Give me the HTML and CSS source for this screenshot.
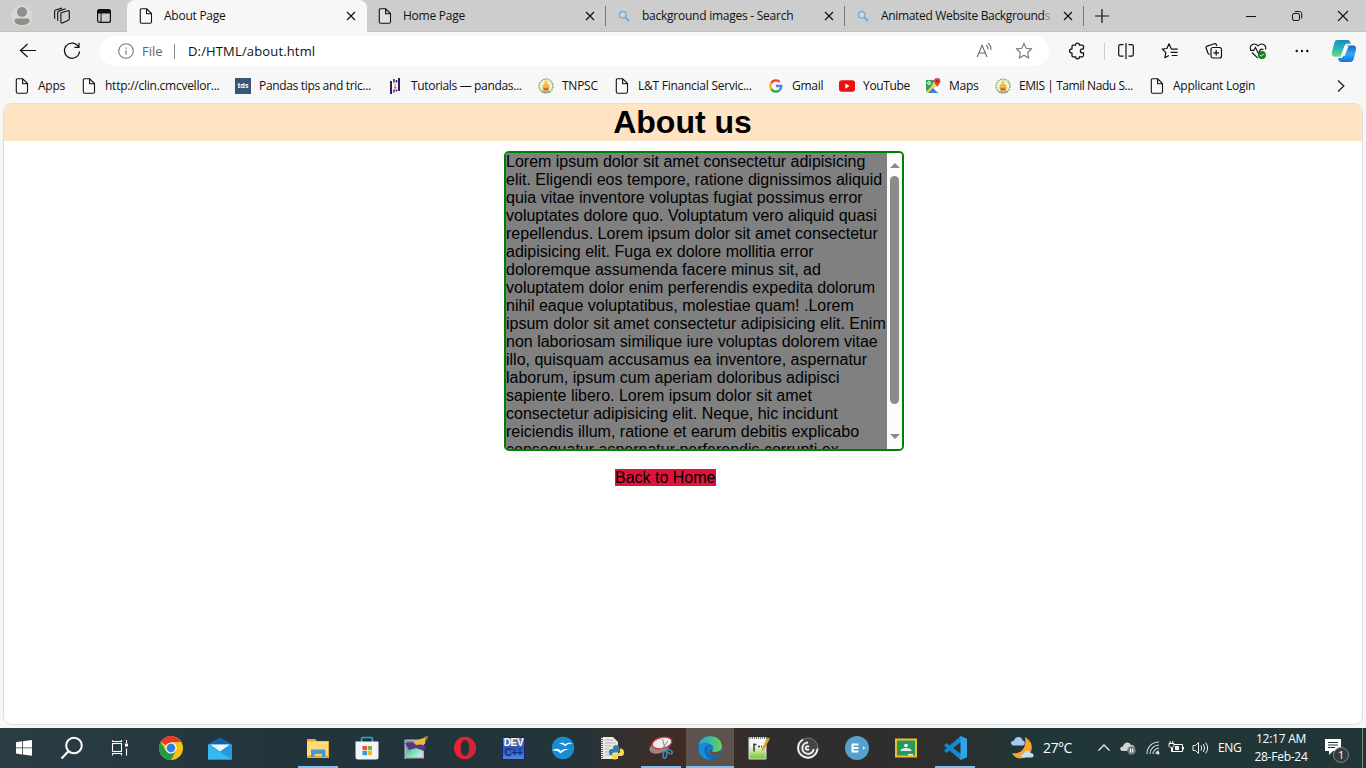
FILE: index.html
```html
<!DOCTYPE html>
<html lang="en">
<head>
<meta charset="utf-8">
<title>About Page</title>
<link rel="stylesheet" href="styles.css">
</head>
<body>
<svg class="defs" aria-hidden="true">
  <symbol id="file" viewBox="0 0 16 16"><path d="M3.5.8h5.2l4.8 4.8v8.1c0 1-.5 1.5-1.5 1.5H3.8c-1 0-1.5-.5-1.5-1.5V2.2c0-.9.4-1.4 1.2-1.4zM8.6.9v4.9h4.8" fill="#fff" fill-opacity=".4" stroke="#111" stroke-width="1.1"/></symbol>
  <symbol id="close" viewBox="0 0 10 10"><path d="M1 1l8 8M9 1l-8 8" stroke="#111" stroke-width="1.15" fill="none"/></symbol>
  <symbol id="find" viewBox="0 0 12 12"><path d="M7.6 7.6L11 11" stroke="#7da5c4" stroke-width="2"/><circle cx="4.8" cy="4.8" r="3.3" fill="#c5dbea" stroke="#82add0" stroke-width="1.5"/></symbol>
  <symbol id="emblem" viewBox="0 0 16 16"><circle cx="8" cy="8" r="7" fill="#f4efcf" stroke="#86b088" stroke-width="1.4" stroke-dasharray="2 .7"/><path d="M8 1.5l3.4 7.2v4H4.6v-4z" fill="#f2ca4c"/><path d="M5 7.5h6M4.5 9.5h7" stroke="#ef9e59"/><path d="M5.5 10h5v2.5h-5z" fill="#e3584c"/><path d="M3.5 14h9" stroke="#79a680" stroke-width="1.3"/></symbol>
</svg>
<header class="tabs">
  <div class="tools">
    <svg width="22" height="22" viewBox="0 0 22 22"><circle cx="11" cy="11" r="10.6" fill="#dad8d6"/><circle cx="11" cy="7" r="5" fill="#918e8a"/><path d="M3.5 15.5q0-2 2-2h11q2 0 2 2c0 6-15 6-15 0z" fill="#918e8a"/></svg>
    <svg width="18" height="18" viewBox="0 0 18 18" fill="none" stroke="#111" stroke-width="1.1"><path d="M8.2 5.7l6.7-2c.9-.2 1.4.1 1.4 1v7.1c0 .7-.3 1.1-1 1.4l-5.9 2.7c-.9.4-1.5 0-1.5-.9V6.7c0-.5.1-.8.3-1zM5.2 13.8c-.4-.2-.5-.5-.5-1V5.4c0-.7.3-1.1 1-1.3l6.900-2.300M2.300 11.500c-.5-.2-.7-.5-.7-1V4.200c0-.7.3-1 .9-1.200L9 1.100"/></svg>
    <svg width="16" height="16" viewBox="0 0 16 16"><rect x="1.6" y="1.6" width="12.8" height="12.8" rx="2" fill="none" stroke="#111" stroke-width="1.2"/><path d="M1.5 5.6V3c0-1 .6-1.7 1.7-1.7h9.600c1 0 1.700.7 1.700 1.700v2.600z" fill="#111"/><path d="M5 5v9" stroke="#111"/></svg>
  </div>
  <div class="tab active"><svg class="i16"><use href="#file"/></svg><span class="ttl">About Page</span><svg class="x"><use href="#close"/></svg></div>
  <div class="tab"><svg class="i16"><use href="#file"/></svg><span class="ttl">Home Page</span><svg class="x"><use href="#close"/></svg></div>
  <div class="tab"><svg class="i12"><use href="#find"/></svg><span class="ttl">background images - Search</span><svg class="x"><use href="#close"/></svg></div>
  <div class="tab"><svg class="i12"><use href="#find"/></svg><span class="ttl t4">Animated Website Background<i>s</i></span><svg class="x"><use href="#close"/></svg></div>
  <svg class="new" width="14" height="14" viewBox="0 0 14 14"><path d="M7 0v14M0 7h14" stroke="#111" stroke-width="1.2"/></svg>
  <div class="winctl">
    <svg width="46" height="32" viewBox="0 0 46 32"><path d="M18 16.5h10" stroke="#111"/></svg>
    <svg width="46" height="32" viewBox="0 0 46 32" fill="none" stroke="#111"><rect x="18.5" y="13.5" width="7" height="7" rx="1.6"/><path d="M20.7 11.5h4.8c1.3 0 2.2.8 2.2 2v5"/></svg>
    <svg width="46" height="32" viewBox="0 0 46 32"><path d="M18 11l10 10M28 11L18 21" stroke="#111" stroke-width="1.1"/></svg>
  </div>
</header>
<nav class="bar">
  <svg class="c44" viewBox="0 0 44 32"><path d="M36 15.5H20.5M27.5 9l-7 6.500 7 6.500" fill="none" stroke="#111" stroke-width="1.2"/></svg>
  <svg class="c44" viewBox="0 0 44 32" fill="none" stroke="#111" stroke-width="1.2"><path d="M34.600 11.800A7.600 7.600 0 1 0 35.600 16.500M35 7.700v4.600h-4.600"/></svg>
  <div class="url">
    <svg width="16" height="16" viewBox="0 0 16 16"><circle cx="8" cy="8" r="7.3" fill="none" stroke="#777" stroke-width="1.1"/><path d="M8 7.2v4.4M8 4.4v1.4" stroke="#777" stroke-width="1.2"/></svg>
    <span class="scheme">File</span><b></b><span class="addr">D:/HTML/about.html</span>
    <svg class="read" width="20" height="18" viewBox="0 0 20 18" fill="none" stroke="#6b6b6b" stroke-width="1.1"><path d="M2.2 15L7.1 3.2 12 15M3.8 11h6.6M11.2 3.3c1.5 1 2 2.3 1.7 4M13 1.2c2.5 1.6 3.4 4 2.7 6.8"/></svg>
    <svg width="18" height="18" viewBox="0 0 18 18"><path d="M9 1.4l2.2 4.9 5.4.6-4 3.6 1.1 5.4L9 13.2l-4.700 2.700 1.100-5.400-4-3.600 5.400-.6z" fill="none" stroke="#777" stroke-width="1.1" stroke-linejoin="round"/></svg>
  </div>
  <div class="right">
    <svg width="18" height="18" viewBox="0 0 18 18" fill="none" stroke="#111" stroke-width="1.25"><path d="M5.200 3h2.300c0-2.600 4-2.600 4 0h2.800c.8 0 1.200.4 1.200 1.200v2.700h-1c-2.800 0-2.800 4 0 4h1v2.700c0 .8-.4 1.200-1.200 1.200h-2.800c0 2.600-4 2.600-4 0H5.200c-.8 0-1.200-.4-1.200-1.200V11c-3.300-.2-3.300-3.900 0-4.100V4.200C4 3.400 4.400 3 5.200 3z"/></svg>
    <b></b>
    <svg width="18" height="18" viewBox="0 0 18 18" fill="none" stroke="#111" stroke-width="1.2"><path d="M6.5 2.7H3.3c-1 0-1.6.6-1.6 1.6v8.200c0 1 .6 1.600 1.600 1.600h3.200M11.500 2.700h3.200c1 0 1.600.6 1.600 1.600v8.200c0 1-.6 1.600-1.600 1.600h-3.200M9 1v16"/></svg>
    <svg width="18" height="18" viewBox="0 0 18 18" fill="none" stroke="#111" stroke-width="1.2"><path d="M10.3 7L8 1.8 5.9 6.5l-4.600.6 3.500 3.500-.9 5.100 4-2.200M10.200 7.100h6.500M9.600 10.300h7M10.700 13.500h5.800" stroke-linejoin="round"/></svg>
    <svg width="18" height="18" viewBox="0 0 18 18" fill="none" stroke="#111" stroke-width="1.2"><rect x="6" y="5.5" width="10.5" height="10.5" rx="2"/><path d="M11.2 8v5.5M8.5 10.8H14M4.500 12.400c-.9-.1-1.300-.6-1.600-1.400L1.200 6.200c-.4-1 0-1.800 1-2.100l7.200-2.300c1-.3 1.600.1 2 1l.4 1.200"/></svg>
    <svg width="18" height="18" viewBox="0 0 18 18"><path d="M1.6 7.5C0 3.2 5.6-.1 9 4c3.400-4.100 9-.8 7.400 3.500M1 8.400h3.800l1.600-3 3 6 2-4h3M3 10.500l5.800 5.700" fill="none" stroke="#111" stroke-width="1.1"/><circle cx="12.9" cy="13" r="4" fill="#197a22"/><path d="M11 13l1.3 1.3L15 11.600" fill="none" stroke="#fff"/></svg>
    <svg width="18" height="18" viewBox="0 0 18 18" fill="#111"><circle cx="3.7" cy="9" r="1.2"/><circle cx="9" cy="9" r="1.2"/><circle cx="14.3" cy="9" r="1.2"/></svg>
    <svg class="copilot" width="26" height="24" viewBox="0 0 26 24"><defs><linearGradient id="cp" x2="0" y2="1"><stop stop-color="#168fc8"/><stop offset=".6" stop-color="#31bcab"/><stop offset="1" stop-color="#7bd67b"/></linearGradient><linearGradient id="cq" x2="0" y2="1"><stop stop-color="#1c62c8"/><stop offset=".5" stop-color="#2fa8f4"/><stop offset="1" stop-color="#1b70df"/></linearGradient></defs><path d="M6.7 1h10c1.8 0 2.4 1.3 3 3.8H16c-1.500 0-2 1-2.500 2.500L10.700 16c-.4 1.200-1 1.800-2.200 1.800H4C1 17.800.4 15.400 1.200 12l2-7.800C3.900 1.800 4.800 1 6.700 1z" fill="url(#cp)"/><path d="M16.300 6.500H22c3 0 3.500 2.300 2.700 5.500l-2 7.700c-.6 2.300-1.600 3.300-3.600 3.300h-9c-1.900 0-2.500-1.500-3-4h3c1.200 0 1.700-.8 2.200-2.200l2.500-8.200c.4-1.400 1.200-2.100 1.500-2.100z" fill="url(#cq)"/><path d="M13.700 7h4l-4.100 10h-4z" fill="#eff9ff"/></svg>
  </div>
</nav>
<nav class="marks">
  <a><svg class="i16"><use href="#file"/></svg><span>Apps</span></a>
  <a><svg class="i16"><use href="#file"/></svg><span>http://clin.cmcvellor...</span></a>
  <a><em>tds</em><span class="m3">Pandas tips and tric...</span></a>
  <a><svg class="i16" viewBox="0 0 16 16"><path d="M4 3v13M12 0v13" stroke="#2b2060" stroke-width="2"/><path d="M7 1v3.500M7 11.500v3M9.500 2v2.500M9.500 11.500v2" stroke="#2b2060" stroke-width="1.5"/><path d="M7.200 5.500h2v2h-2z" fill="#e7b52c"/><path d="M7.200 8.500h2v2h-2z" fill="#d43191"/></svg><span class="m4">Tutorials — pandas...</span></a>
  <a><svg class="i16"><use href="#emblem"/></svg><span>TNPSC</span></a>
  <a><svg class="i16"><use href="#file"/></svg><span>L&amp;T Financial Servic...</span></a>
  <a><svg class="i16" viewBox="0 0 16 16" fill="none" stroke-width="2.4"><path d="M3.2 5.1A5.3 5.3 0 0 1 11.7 4" stroke="#e94235"/><path d="M3.2 5.1a6 6 0 0 0 0 5.8" stroke="#f9bb05"/><path d="M3.2 10.900a5.300 5.300 0 0 0 8.300 1.200" stroke="#34a853"/><path d="M8 8h5.300c0 1.800-.5 3.200-1.800 4.100" stroke="#4285f4"/></svg><span>Gmail</span></a>
  <a><svg class="i16" viewBox="0 0 16 16"><rect y="2.3" width="16" height="11.5" rx="2.8" fill="#f20c0c"/><path d="M6.300 5.500l4.200 2.600-4.200 2.600z" fill="#fff"/></svg><span class="m8">YouTube</span></a>
  <a><svg class="i16" viewBox="0 0 16 16"><path d="M1 2h13v13H1z" fill="#dce2e6"/><path d="M1 2h9L3 14 1 12z" fill="#31a455"/><path d="M3 15l10-10 1 8-6 2z" fill="#fff"/><path d="M1 14L12 3l2 2L4 15z" fill="#f8cd4a"/><path d="M3 15l5-5 5 5z" fill="#3e7edf"/><path d="M12.200 0a3.200 3.200 0 0 1 3.200 3.200c0 2-2.200 3.600-3.200 5.800-1-2.200-3.200-3.800-3.200-5.800A3.200 3.200 0 0 1 12.200 0z" fill="#e14437"/><circle cx="12.2" cy="3.2" r="1.1" fill="#8b251e"/><circle cx="4" cy="5" r="1.4" fill="none" stroke="#fff"/></svg><span>Maps</span></a>
  <a><svg class="i16"><use href="#emblem"/></svg><span class="m10">EMIS | Tamil Nadu S...</span></a>
  <a><svg class="i16"><use href="#file"/></svg><span>Applicant Login</span></a>
  <svg class="more" width="8" height="12" viewBox="0 0 8 12"><path d="M1 .5L6.800 6 1 11.500" fill="none" stroke="#222" stroke-width="1.3"/></svg>
</nav>
<main class="view">
  <h1>About us</h1>
  <section class="box">
    <div class="text">Lorem ipsum dolor sit amet consectetur adipisicing
elit. Eligendi eos tempore, ratione dignissimos aliquid
quia vitae inventore voluptas fugiat possimus error
voluptates dolore quo. Voluptatum vero aliquid quasi
repellendus. Lorem ipsum dolor sit amet consectetur
adipisicing elit. Fuga ex dolore mollitia error
doloremque assumenda facere minus sit, ad
voluptatem dolor enim perferendis expedita dolorum
nihil eaque voluptatibus, molestiae quam! .Lorem
ipsum dolor sit amet consectetur adipisicing elit. Enim
non laboriosam similique iure voluptas dolorem vitae
illo, quisquam accusamus ea inventore, aspernatur
laborum, ipsum cum aperiam doloribus adipisci
sapiente libero. Lorem ipsum dolor sit amet
consectetur adipisicing elit. Neque, hic incidunt
reiciendis illum, ratione et earum debitis explicabo
consequatur aspernatur perferendis corrupti ex</div>
    <div class="scroll"><i class="up"></i><i class="thumb"></i><i class="down"></i></div>
  </section>
  <a class="back">Back to Home</a>
</main>
<footer class="task">
  <div class="sys">
    <svg width="48" height="40" viewBox="0 0 48 40"><path d="M16 14.300l6-1v6.100h-6zM22.800 13.200l9.200-1.300v7.500h-9.200zM16 20.200h6v6.200l-6-1zM22.800 20.200H32v7.600l-9.200-1.300z" fill="#fff"/></svg>
    <svg width="48" height="40" viewBox="0 0 48 40"><circle cx="26" cy="17.500" r="7.800" fill="none" stroke="#fff" stroke-width="2"/><path d="M20.500 23.200L13.500 30.500" stroke="#fff" stroke-width="2.2"/></svg>
    <svg width="48" height="40" viewBox="0 0 48 40" fill="none" stroke="#fff" stroke-width="1.1"><rect x="16.500" y="15.500" width="9" height="8"/><path d="M16.500 12v1.500h9V12M16.500 27.500v-2h9v2M30.500 12v3M30.500 20.500v7"/><path d="M29.500 16h2v2h-2z" fill="#fff"/></svg>
  </div>
  <div class="apps">
    <div><svg viewBox="0 0 24 24"><circle cx="12" cy="12" r="12" fill="#fbc116"/><path d="M12 12L1.600 6A12 12 0 0 1 22.400 6H12z" fill="#e33b2e"/><path d="M1.600 6A12 12 0 0 0 12 24l5-9-5-3-5 3z" fill="#279847"/><circle cx="12" cy="12" r="5.600" fill="#fff"/><circle cx="12" cy="12" r="4.400" fill="#347de0"/></svg></div>
    <div><svg viewBox="0 0 24 24"><path d="M0 8l12-6.500L24 8v4H0z" fill="#1264b1"/><path d="M0 8.300h24v15.200H0z" fill="#259bdd"/><path d="M0 8.500l24 15H0z" fill="#37b9ee"/><path d="M2 8.500h20l-10 7z" fill="#f1f5f7"/></svg></div>
    <div></div>
    <div class="run"><svg viewBox="0 0 24 24"><path d="M1 3h8l2 2h12v17H1z" fill="#e8ab2c"/><path d="M1 5.500h21v14H1z" fill="#ffdc75"/><path d="M5 13.500h14.500V21H16v-3H8.500v3H5z" fill="#4698d4"/></svg></div>
    <div><svg viewBox="0 0 24 24"><path d="M6.500 6V3Q6.500 1.500 8 1.500h8q1.500 0 1.500 1.500v3" fill="none" stroke="#23a9dc" stroke-width="1.7"/><path d="M.5 5.500h23V21q0 2.500-2.500 2.500H3Q.5 23.500.5 21z" fill="#f2f4f5"/><path d="M7.500 10H12v4.200H7.500z" fill="#e8562e"/><path d="M12.800 10h4.200v4.200h-4.200z" fill="#7bb135"/><path d="M7.500 15H12v4.200H7.500z" fill="#2c9ddb"/><path d="M12.800 15h4.200v4.200h-4.200z" fill="#f5b71f"/></svg></div>
    <div><svg viewBox="0 0 24 24"><defs><linearGradient id="pl" x2="1" y2="1"><stop stop-color="#3f7bb0"/><stop offset=".5" stop-color="#6ddca7"/><stop offset="1" stop-color="#d9eaf7"/></linearGradient></defs><path d="M.5 3.500h20V23H.5z" fill="#b5b0c9"/><path d="M2.500 5h16v16h-16z" fill="url(#pl)"/><path d="M20.500 5v18H2" fill="none" stroke="#30244b"/><path d="M1 7l10-1 11 4-2 5-8-3-7 2z" fill="#5d3585"/><path d="M9 6L22 1l-1 7-9 1z" fill="#e8ba36"/><path d="M20 1l4-1-1 4z" fill="#b98732"/></svg></div>
    <div><svg viewBox="0 0 24 24"><path d="M12 .8C5.500.8 1 5.700 1 12s4.500 11.200 11 11.200S23 18.300 23 12 18.500.8 12 .8zm0 3c2.700 0 4.300 3.500 4.300 8.200s-1.600 8.200-4.300 8.200S7.700 16.700 7.700 12 9.300 3.800 12 3.800z" fill="#ed2134" fill-rule="evenodd"/><path d="M15 1.500a11 11 0 0 1 0 21l-2-2.500c5-2 4.500-14 0-16z" fill="#d32434"/></svg></div>
    <div><div class="dev"><b>DEV</b><b>C++</b></div></div>
    <div><svg viewBox="0 0 24 24"><circle cx="12" cy="12" r="11.200" fill="#188ed0"/><path d="M8 8c3-2 5-1.500 6 .5 2-2 5-2.500 8-1-4-.2-6 1-8 3-1-2-3-2.800-6-2.500zM1 14.500c4-2.500 7-2 8.500.5 3-2.500 6-2.500 9-1.500-4 0-6 1.200-9 4-2-2.500-4-3.500-8.500-3z" fill="#fff"/></svg></div>
    <div><svg viewBox="0 0 24 24"><path d="M1 1h12l5 5v17H1z" fill="#e8e8e4"/><path d="M2 1v22" stroke="#555" stroke-width="2" stroke-dasharray="1 1"/><path d="M5 4h8M5 7h11M5 10h7M5 13h4M5 16h4M5 19h5" stroke="#b5b5b5"/><path d="M13 13v-1q0-3 3-3t3.500 3v2q0 2.500-3 2.500h-2q-2.500 0-2.500 3-3 0-3-3.500T12 13z" fill="#377cb0"/><path d="M20 12.500q4 0 4 4T20.500 20H18q0 3.500-3.500 3.500T12 21v-1.500q0-2 3-2h2q3 0 3-3z" fill="#f9d949"/></svg></div>
    <div class="run"><svg viewBox="0 0 24 24"><ellipse cx="10.500" cy="11" rx="10.500" ry="6" transform="rotate(-20 10.500 11)" fill="#9c8582"/><ellipse cx="13" cy="7" rx="10" ry="5.500" transform="rotate(-12 13 7)" fill="#efedec" stroke="#c93a47" stroke-width="1.3"/><path d="M13.500 3l3 11M19 5l-7 9" stroke="#888"/><g fill="none" stroke="#398fb3" stroke-width="1.5"><ellipse cx="16" cy="18.500" rx="1.800" ry="3.800" transform="rotate(10 16 18.500)"/><ellipse cx="20.500" cy="15.500" rx="3" ry="1.700" transform="rotate(30 20.500 15.500)"/></g></svg></div>
    <div class="run current"><svg viewBox="0 0 24 24"><defs><linearGradient id="eg"><stop stop-color="#20a7db"/><stop offset="1" stop-color="#62d45b"/></linearGradient></defs><circle cx="12" cy="12" r="11.800" fill="#157bca"/><path d="M.5 10C2-3 23-3 24 10c.3 4-3 6-7 6-3 0-4-1-2-3 2-5-7-8-14.500-3z" fill="url(#eg)"/><path d="M.5 10c5-5 11-3 12 0-5 1-5 8 1 9.500 3 1 6 .5 8.500-.8C17 26 5 26 1.500 17Q0 14 .5 10z" fill="#1466b7"/><path d="M2 8C7 5 11 7 12.500 10c-5-2-8 3-5 8 1 2 2 4 5 5.500C4 24-2 16 2 8z" fill="#198cd7"/><path d="M15 13c-2 2-1 3 2 3 2.600 0 4.500-.6 5.700-1.800-.3 1.800-.5 3-.8 3.800-2 1.500-5 2-7.500 1.300-3-.8-4-5.300.6-6.300z" fill="#5d524d"/></svg></div>
    <div><svg viewBox="0 0 24 24"><defs><linearGradient id="np" x2="0" y2="1"><stop offset=".4" stop-color="#f7f9f0"/><stop offset="1" stop-color="#72c51d"/></linearGradient></defs><path d="M2 1.500h17V23H2z" fill="url(#np)" stroke="#ddd"/><path d="M3 2h15" stroke="#777" stroke-width="2" stroke-dasharray="1 1"/><path d="M7 7.500v8M7 8.500h2.500M11 10.500h2M14 10.500h1" stroke="#333" stroke-width="1.5"/><path d="M20.500 1.500l2.500 1-6 11-2.500 2 .5-3.500z" fill="#d4a52f"/></svg></div>
    <div><svg viewBox="0 0 24 24" fill="none" stroke="#efefef" stroke-width="2"><circle cx="12" cy="12" r="10" fill="#444" stroke="#777" stroke-width="1"/><path d="M7 3.500a9.700 9.700 0 1 0 14.500 9M12 6.500a5.700 5.700 0 1 0 5.700 6.500M13 11a1.800 1.800 0 1 0 0 2"/></svg></div>
    <div><svg viewBox="0 0 24 24"><circle cx="12" cy="12" r="12" fill="#54a2cc"/><path d="M13.500 8.500H7.500v7h6M7.500 12h6" stroke="#fff" stroke-width="2" fill="none"/><path d="M18 10.500l2.500 1.500-2.500 1.500z" fill="#fff"/></svg></div>
    <div><svg viewBox="0 0 24 24"><path d="M1 2.500h22v19H1z" fill="#efbd2e"/><path d="M3 4.500h18v15H3z" fill="#249b5c"/><circle cx="12" cy="9.500" r="1.800" fill="#fff"/><path d="M6.500 15q0-3 5.500-3t5.500 3z" fill="#d9efdf"/><path d="M14 18h5v1.500h-5z" fill="#eee"/></svg></div>
    <div class="run"><svg viewBox="0 0 24 24"><path d="M17.500 0L24 3v18l-6.500 3L1 9.500 3.500 7 18 18V6L3.500 17 1 14.500z" fill="#1688d2"/><path d="M17.500 0L24 3v18l-6.500 3z" fill="#30a5ec"/></svg></div>
  </div>
  <div class="tray">
    <svg width="26" height="24" viewBox="0 0 26 24"><path d="M15 1c9 5 9 15 1 20-6 3-12 1-14-4 9 2 15-5 13-16z" fill="#f5a62e"/><path d="M3 9.500C-.5 8 1 4.500 4 4.800 5-.2 12 0 12.500 4.500c3 0 3 5 0 5z" fill="#aac9f2"/><path d="M13 21.500c-2-.5-2-4 1-4 1-4 6-3.500 6.500-.5 4 0 4 4.500 1 4.500z" fill="#c7dcf7"/></svg>
    <span class="temp">27°C</span>
    <svg class="caret" width="14" height="10" viewBox="0 0 14 10"><path d="M1.500 7.500L7 2l5.500 5.500" fill="none" stroke="#eee" stroke-width="1.3"/></svg>
    <svg class="cloud" width="16" height="14" viewBox="0 0 16 14"><path d="M2 10C-1 9 0 5.500 3 5.500 4 1 9 0 11 4c4-1 5 5 2 6z" fill="#d1d3d4"/><circle cx="11.500" cy="9.500" r="4.300" fill="#737a7c"/><path d="M10.500 7.500v4M12.700 7.500v4" stroke="#fff" stroke-width="1.1"/></svg>
    <svg class="wifi" width="14" height="14" viewBox="0 0 14 14" fill="none" stroke="#ddd" stroke-width="1.1"><path d="M1 13C1 6 6 1 13 1M4 13c0-5 4-9 9-9M7 13c0-3 3-6 6-6M10 13c0-2 1-3 3-3"/><circle cx="12" cy="12" r="1" fill="#fff"/></svg>
    <svg class="bat" width="16" height="14" viewBox="0 0 16 14" fill="none" stroke="#fff"><path d="M6 3.500h8.500v7H4.500V7M15.500 6v2.500M1 2.500h5v2C6 6 5 6.500 3.500 6.500S1 6 1 4.500zM2.200 0v2M4.800 0v2M3.500 6.500v4h1"/><path d="M7.500 5.500h3v3h-3z" fill="#ddd"/></svg>
    <svg class="vol" width="17" height="14" viewBox="0 0 17 14" fill="none" stroke="#eee"><path d="M1 4.500h2.500l3-3v11l-3-3H1zM9 4.500q1.500 2.500 0 5M11.300 3q2.700 4 0 8M13.700 1.500q3.800 5.500 0 11"/></svg>
    <span class="eng">ENG</span>
    <div class="clock"><span>12:17 AM</span><span>28-Feb-24</span></div>
    <div class="note"><svg width="18" height="17" viewBox="0 0 18 17"><path d="M0 0h16v12H8l-4 4v-4H0z" fill="#fff"/><path d="M3 3.500h10M3 6h10M3 8.500h7" stroke="#263638"/></svg><b>1</b></div>
    <i class="edge"></i>
  </div>
</footer>
</body>
</html>
```
FILE: styles.css
```css
* { box-sizing: border-box; }
body { margin: 0; width: 1366px; height: 768px; overflow: hidden; display: flex; flex-direction: column; background: #f7f7f7; color: #111; font: 12px/16px "Open Sans", "Noto Sans", sans-serif; letter-spacing: -.25px; }
svg { display: block; flex: none; }
.defs { width: 0; height: 0; position: absolute; }
.i16 { width: 16px; height: 16px; }
.i12 { width: 12px; height: 12px; margin: 0 2px; }
.tabs { height: 32px; flex: none; display: flex; align-items: center; background: #cdcdcd; border-bottom: 1px solid #c2c2c2; }
.tools { width: 127px; display: flex; align-items: center; padding-left: 11px; }
.tools svg:nth-child(2) { margin-left: 20px; }
.tools svg:nth-child(3) { margin-left: 25px; }
.tab { width: 239px; height: 20px; display: flex; align-items: center; padding: 0 10px; border-right: 1px solid #777; white-space: nowrap; }
.tab.active { width: 240px; height: 33px; margin-bottom: -1px; background: #f7f7f7; border: 0; border-radius: 8px 8px 0 0; padding: 0 11px 1px; }
.ttl { flex: 1; margin-left: 10px; }
.ttl i { font-style: normal; color: #888; }
.t4 { letter-spacing: -.33px; }
.tab .x { width: 10px; height: 10px; }
.new { margin-left: 11px; }
.winctl { display: flex; margin-left: auto; }
.bar { height: 38px; flex: none; display: flex; align-items: center; }
.c44 { width: 44px; height: 32px; }
.url { width: 949px; height: 30px; margin-left: 12px; background: #fff; border-radius: 15px; display: flex; align-items: center; padding-left: 18px; font-size: 13px; }
.scheme { margin-left: 8px; width: 32px; color: #666; letter-spacing: 0; }
.url b { width: 1px; height: 15px; background: #888; margin-right: 13px; }
.addr { letter-spacing: .15px; }
.read { margin-left: auto; margin-right: 20px; }
.url svg:last-child { margin-right: 16px; }
.right { display: flex; align-items: center; margin-left: 19px; gap: 26px; }
.right b { width: 1px; height: 17px; background: #ccc; margin: 0 -11px 0 -8px; }
.right b + svg { margin-left: -3px; }
.right .copilot { margin-left: -6px; }
.marks { height: 33px; flex: none; padding: 0 0 1px 14px; display: grid; grid-template-columns: 67px 154px 152px 151px 76px 154px 71px 86px 70px 154px 188px 8px; align-items: center; white-space: nowrap; }
.marks a { display: flex; align-items: center; gap: 8px; }
.marks em { width: 16px; height: 16px; background: #355878; color: #fff; font: bold 7px/15px "Open Sans", sans-serif; text-align: center; letter-spacing: 0; }
.m3, .m4, .m8 { letter-spacing: -.33px; }
.m10 { letter-spacing: -.44px; }
.view { height: 622px; width: 1360px; flex: none; margin-left: 3px; background: #fff; border: 1px solid #dedede; border-radius: 9px; overflow: hidden; font: 16px/18px "Liberation Sans", Arial, sans-serif; letter-spacing: 0; color: #000; }
.view h1 { margin: 0; height: 37px; padding-right: 1px; background: bisque; font: bold 32px/37px "Liberation Sans", Arial, sans-serif; text-align: center; }
.box { width: 400px; height: 300px; margin: 10px 0 18px 500px; border: 2px solid green; border-radius: 5px; display: flex; overflow: hidden; background: #fff; }
.text { flex: 1; background: gray; white-space: pre; overflow: hidden; }
.scroll { width: 15px; display: flex; flex-direction: column; align-items: center; background: #fcfcfc; }
.up { border: 5px solid transparent; border-top: 0; border-bottom: 5px solid #8b8b8b; margin-top: 10px; }
.thumb { width: 9px; height: 228px; border-radius: 5px; background: #8b8b8b; margin-top: 8px; }
.down { border: 5px solid transparent; border-bottom: 0; border-top: 5px solid #8b8b8b; margin-top: 30px; }
.back { display: block; width: 101px; height: 17px; line-height: 17px; margin-left: 611px; background: crimson; white-space: nowrap; }
.task { margin-top: auto; height: 40px; flex: none; display: flex; background: linear-gradient(90deg, #2b3d44, #22343c 20%, #23343a 42%, #35302e 46%, #402b24 50%, #302e2d 56%, #302e2d 65%, #2b302e 70%, #213637 75%, #213637); color: #fff; }
.sys { width: 146px; display: flex; }
.apps { display: flex; }
.apps > div { width: 49px; height: 40px; display: flex; justify-content: center; align-items: center; }
.apps svg { width: 24px; height: 24px; }
.apps .run { background: linear-gradient(#80bdec, #80bdec) 50% 100% / 40px 2px no-repeat; }
.apps .current { background: linear-gradient(#80bdec, #80bdec) 50% 100% / 48px 2px no-repeat, linear-gradient(#5d524d, #5d524d) 50% 0 / 48px 40px no-repeat; }
.dev { width: 23px; height: 23px; border: 1px solid #17276b; background: linear-gradient(#6b7d9c, #2b55b0 50%, #4f88dc); display: flex; flex-direction: column; align-items: center; }
.dev b { font: bold 10px/10px "Liberation Sans", sans-serif; letter-spacing: -.3px; }
.dev b + b { color: #0d2f86; }
.tray { flex: 1; display: flex; align-items: center; margin-left: 31px; }
.temp { width: 54px; margin-left: 7px; font-size: 14px; letter-spacing: -.5px; }
.cloud { margin-left: 9px; }
.wifi { margin-left: 10px; }
.bat { margin-left: 8px; }
.vol { margin-left: 8px; }
.eng { margin-left: 9px; width: 27px; letter-spacing: -.4px; }
.clock { width: 60px; margin-left: 6px; text-align: center; line-height: 18px; display: flex; flex-direction: column; white-space: nowrap; }
.note { position: relative; margin-left: 14px; padding-bottom: 1px; }
.note b { position: absolute; left: 8px; top: 8px; width: 16px; height: 16px; border-radius: 8px; border: 1px solid #888; background: #333b3d; font: 11px/14px "Open Sans", sans-serif; text-align: center; }
.edge { margin-left: auto; margin-right: 3px; width: 1px; height: 40px; background: #7c898a; }
```
